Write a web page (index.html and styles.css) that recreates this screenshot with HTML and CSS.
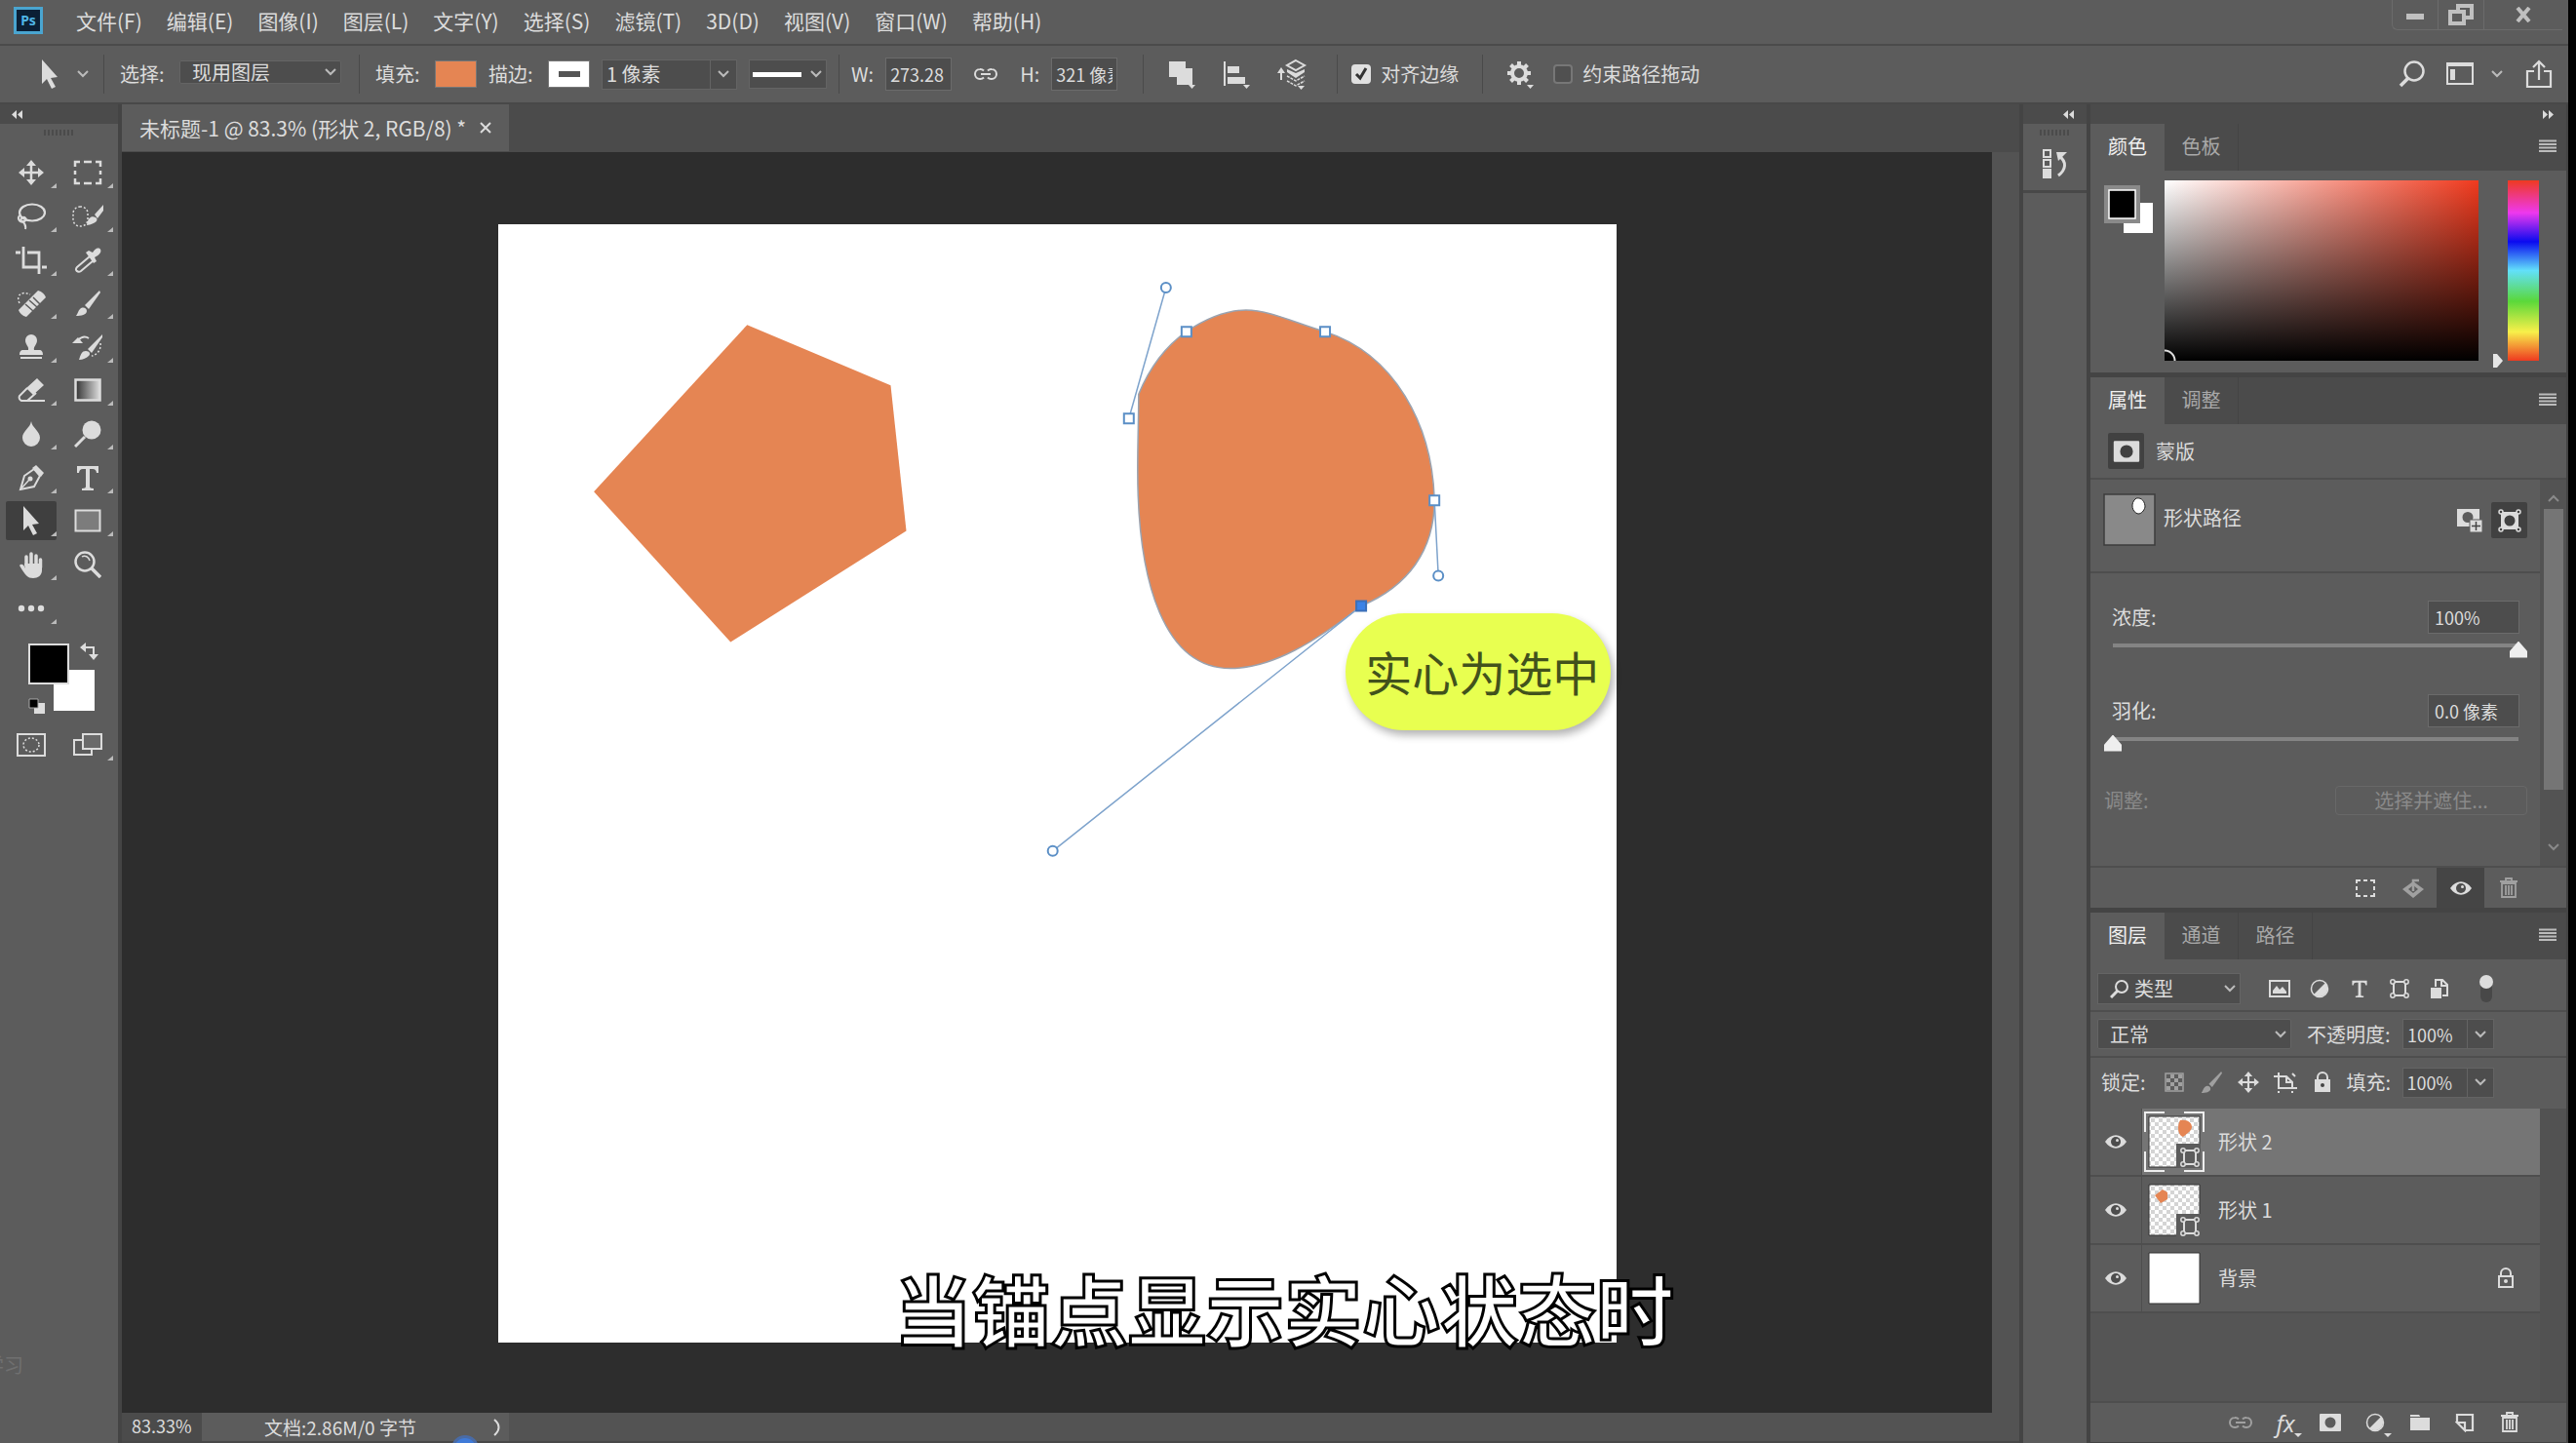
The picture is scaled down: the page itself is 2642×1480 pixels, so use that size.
FILE: index.html
```html
<!DOCTYPE html>
<html lang="zh-CN">
<head>
  <meta charset="UTF-8" />
  <meta name="viewport" content="width=device-width, initial-scale=1.0"/>
  <title>未标题-1 @ 83.3%</title>
  <link rel="stylesheet" href="styles.css">
</head>
<body>
  <!-- shared icons -->
  <svg class="defs" aria-hidden="true">
    <symbol id="i-down" viewBox="0 0 14 10"><path d="M2 2l5 5 5-5" fill="none" stroke="#bbb" stroke-width="2"/></symbol>
    <symbol id="i-menu" viewBox="0 0 18 14"><path d="M0 1.500h18M0 5h18M0 8.500h18M0 12h18" stroke="currentColor" stroke-width="2"/></symbol>
    <symbol id="i-eye" viewBox="0 0 22 16"><path d="M0 8C6-1 16-1 22 8 16 17 6 17 0 8z" fill="currentColor"/><circle cx="11" cy="8" r="5" fill="#4d4d4d"/><circle cx="12.500" cy="6.500" r="1.500" fill="currentColor"/></symbol>
    <symbol id="i-path" viewBox="0 0 20 20"><path d="M4 3h12v14H4z" fill="none" stroke="currentColor" stroke-width="2"/><g fill="#5c5c5c" stroke="currentColor" stroke-width="1.500"><circle cx="3" cy="3" r="2.200"/><circle cx="17" cy="3" r="2.200"/><circle cx="3" cy="17" r="2.200"/><circle cx="17" cy="17" r="2.200"/></g></symbol>
    <symbol id="i-half" viewBox="0 0 20 20"><circle cx="10" cy="10" r="8.500" fill="none" stroke="currentColor" stroke-width="1.500"/><path d="M16 4A8.500 8.500 0 0 1 4 16z" fill="currentColor"/></symbol>
    <symbol id="i-mask" viewBox="0 0 24 20"><path fill-rule="evenodd" d="M2 1h20a1 1 0 0 1 1 1v16a1 1 0 0 1-1 1H2a1 1 0 0 1-1-1V2a1 1 0 0 1 1-1zM12 4.500a5.500 5.500 0 1 0 0 11 5.500 5.500 0 0 0 0-11z" fill="currentColor"/></symbol>
    <symbol id="i-move" viewBox="0 0 26 26"><path d="M13 3v20M3 13h20" stroke="currentColor" stroke-width="2.500"/><path d="M13 0l5 6H8zM13 26l5-6H8zM0 13l6-5v10zM26 13l-6-5v10z" fill="currentColor"/></symbol>
    <symbol id="i-brush" viewBox="0 0 26 26"><path d="M1 26c2-3 2-5 4-7 3-3 7-1 7 2 0 4-6 5-11 5z" fill="currentColor"/><path d="M10 15L25 0l1 2-12 17z" fill="currentColor"/></symbol>
    <symbol id="i-trash" viewBox="0 0 20 22"><path d="M1 4h18M7 4V1h6v3M3 6h14v14H3zM7 8v10M10 8v10M13 8v10" fill="none" stroke="currentColor" stroke-width="1.800"/></symbol>
    <symbol id="i-link" viewBox="0 0 26 14"><path d="M11 3.500A5 5 0 0 0 7 2a5 5 0 0 0 0 10 5 5 0 0 0 4-1.500M15 3.500A5 5 0 0 1 19 2a5 5 0 0 1 0 10 5 5 0 0 1-4-1.500M8 7h10" fill="none" stroke="currentColor" stroke-width="2"/></symbol>
    <symbol id="i-type" viewBox="0 0 24 26"><path d="M1 1h22v7h-2c-.5-3-1.500-4-4-4h-3v18c0 1 1 2 4 2v2H6v-2c3 0 4-1 4-2V4H7C4.500 4 3.500 5 3 8H1z" fill="currentColor"/></symbol>
    <symbol id="i-cursor" viewBox="0 0 20 30"><path d="M2 0l16 18-7 1 5 9-4 2-5-10-5 5z" fill="currentColor"/></symbol>
    <pattern id="checker" width="8" height="8" patternUnits="userSpaceOnUse"><path d="M0 0h8v8H0z" fill="#fff"/><path d="M0 0h4v4H0zM4 4h4v4H4z" fill="#d4d4d4"/></pattern>
    <linearGradient id="ramp"><stop offset="0" stop-color="#333"/><stop offset="1" stop-color="#ddd"/></linearGradient>
  </svg>

  <div class="app">
    <header class="menubar">
      <svg class="logo" viewBox="0 0 30 28" role="img" aria-label="Ps"><rect x="1.500" y="1.500" width="27" height="25" fill="#0b1f35" stroke="#4aa5d0" stroke-width="3"/><text x="15" y="19" text-anchor="middle">Ps</text></svg>
      <nav class="menus">
        <a href="#">文件(F)</a>
        <a href="#">编辑(E)</a>
        <a href="#">图像(I)</a>
        <a href="#">图层(L)</a>
        <a href="#">文字(Y)</a>
        <a href="#">选择(S)</a>
        <a href="#">滤镜(T)</a>
        <a href="#">3D(D)</a>
        <a href="#">视图(V)</a>
        <a href="#">窗口(W)</a>
        <a href="#">帮助(H)</a>
      </nav>
      <div class="window-controls">
        <button aria-label="最小化"><svg width="20" height="20" viewBox="0 0 20 20"><path d="M1 9h18v6H1z" fill="currentColor"/></svg></button>
        <button aria-label="还原"><svg width="26" height="22" viewBox="0 0 26 22"><path d="M10 7V2h14v12h-7M2 8h14v12H2z" fill="none" stroke="currentColor" stroke-width="4"/></svg></button>
        <button class="close" aria-label="关闭"><svg width="18" height="16" viewBox="0 0 18 16"><path d="M3 1l12 14M15 1L3 15" stroke="currentColor" stroke-width="4"/></svg></button>
      </div>
    </header>

    <div class="optionsbar">
      <div class="opt-group tool-preset">
        <svg width="22" height="30"><use href="#i-cursor"/></svg>
        <button aria-label="工具预设"><svg width="14" height="10"><use href="#i-down"/></svg></button>
      </div>
      <div class="opt-group">
        <label class="cap" for="pick">选择:</label>
        <select id="pick" class="pick"><option>现用图层</option></select>
      </div>
      <div class="opt-group">
        <span class="cap">填充:</span>
        <button class="swatch orange" aria-label="填充"></button>
        <label class="cap" for="strokeWidth">描边:</label>
        <button class="swatch stroke" aria-label="描边颜色"></button>
        <div class="combo wide">
          <input id="strokeWidth" type="text" value="1 像素">
          <button aria-label="描边宽度"><svg width="14" height="10"><use href="#i-down"/></svg></button>
        </div>
        <button class="line-style" aria-label="描边类型"><i></i><svg width="14" height="10"><use href="#i-down"/></svg></button>
      </div>
      <div class="opt-group size">
        <label for="w">W:</label>
        <input id="w" class="field" type="text" value="273.28">
        <button class="link" aria-label="链接宽高"><svg width="26" height="16"><use href="#i-link"/></svg></button>
        <label for="h">H:</label>
        <input id="h" class="field" type="text" value="321 像素">
      </div>
      <div class="opt-group ops">
        <button aria-label="路径操作"><svg width="30" height="30" viewBox="0 0 30 30"><path d="M2 2h17v7h7v17H10v-8H2z" fill="currentColor"/><path d="M22 26h7l-3.500 4z" fill="currentColor"/></svg></button>
        <button aria-label="路径对齐"><svg width="30" height="30" viewBox="0 0 30 30"><path d="M3 2v25" stroke="currentColor" stroke-width="2"/><path d="M6 7h12v7H6zM6 18h18v7H6zM22 26h7l-3.500 4z" fill="currentColor"/></svg></button>
        <button aria-label="路径排列"><svg width="32" height="32" viewBox="0 0 32 32"><path d="M5 22v-9" stroke="currentColor" stroke-width="2"/><path d="M5 9l4 6H1z" fill="currentColor"/><path d="M20 2l9 5-9 5-9-5z" fill="none" stroke="currentColor" stroke-width="2"/><path d="M11 11l9 4 9-4v3l-9 6-9-6z" fill="currentColor"/><path d="M11 18l9 5 9-5M11 23l9 5 9-5" fill="none" stroke="currentColor" stroke-width="1.500" stroke-dasharray="3 1"/><path d="M22 28h7l-3.500 4z" fill="currentColor"/></svg></button>
      </div>
      <div class="opt-group check">
        <input id="snap" type="checkbox" checked><label for="snap">对齐边缘</label>
      </div>
      <div class="opt-group check last">
        <button class="gear" aria-label="设置"><svg width="28" height="30" viewBox="0 0 28 30"><circle cx="13" cy="14" r="7" fill="none" stroke="currentColor" stroke-width="4"/><path d="M13 2v5M13 21v5M1 14h5M20 14h5M4.500 5.500L8 9M18 19l3.500 3.500M21.500 5.500L18 9M8 19l-3.500 3.500" stroke="currentColor" stroke-width="4"/><path d="M21 26h7l-3.500 4z" fill="currentColor"/></svg></button>
        <input id="drag" type="checkbox"><label for="drag">约束路径拖动</label>
      </div>
      <div class="opt-right">
        <button aria-label="搜索"><svg width="28" height="30" viewBox="0 0 28 30"><circle cx="16" cy="12" r="9.500" fill="none" stroke="currentColor" stroke-width="2.500"/><path d="M10 19l-8 8" stroke="currentColor" stroke-width="3.500"/></svg></button>
        <button aria-label="工作区"><svg width="30" height="26" viewBox="0 0 30 26"><path d="M2 3h26v20H2z" fill="none" stroke="currentColor" stroke-width="2"/><path d="M1 1h28v4H1zM5 8h5v11H5z" fill="currentColor"/></svg></button>
        <button class="slim" aria-label="切换工作区"><svg width="14" height="10"><use href="#i-down"/></svg></button>
        <button aria-label="共享"><svg width="28" height="30" viewBox="0 0 28 30"><path d="M9 12H2v16h24V12h-7M14 21V3M8 8l6-6 6 6" fill="none" stroke="currentColor" stroke-width="2.200"/></svg></button>
      </div>
    </div>

    <main class="workspace">
      <aside class="toolbox">
        <div class="collapse"><svg width="12" height="9" viewBox="0 0 12 9"><path d="M5 0v9L0 4.500zM11 0v9L6 4.500z" fill="currentColor"/></svg></div>
        <div class="grip"></div>
        <div class="tools">
          <button class="more" aria-label="移动"><svg width="26" height="26"><use href="#i-move"/></svg></button>
          <button class="more" aria-label="矩形选框"><svg width="30" height="26" viewBox="0 0 30 26"><path d="M2 7V2h5M11 2h8M23 2h5v5M28 11v4M28 19v5h-5M19 24h-8M7 24H2v-5M2 15v-4" fill="none" stroke="currentColor" stroke-width="2.500"/></svg></button>
          <button class="more" aria-label="套索"><svg width="30" height="28" viewBox="0 0 30 28"><ellipse cx="16" cy="10" rx="13" ry="8.500" fill="none" stroke="currentColor" stroke-width="2.200"/><path d="M3 13c-3 4 1 8 5 6s0-6-3-3 6 3 4 11" fill="none" stroke="currentColor" stroke-width="2"/></svg></button>
          <button class="more" aria-label="快速选择"><svg width="34" height="28" viewBox="0 0 34 28"><rect x="2" y="4" width="15" height="20" rx="7" fill="none" stroke="currentColor" stroke-width="1.500" stroke-dasharray="2 2"/><path d="M16 23c1-8 5-10 9-8s0 7-9 8zM24 12l9-10v6l-6 8z" fill="currentColor"/></svg></button>
          <button class="more" aria-label="裁剪"><svg width="32" height="28" viewBox="0 0 32 28"><path d="M0 6h5M8 0v21h16M27 21h5M12 6h12v22" fill="none" stroke="currentColor" stroke-width="2.800"/></svg></button>
          <button class="more" aria-label="吸管"><svg width="28" height="28" viewBox="0 0 28 28"><path d="M16 10L3 21c-3 3 1 6 4 4l13-11" fill="none" stroke="currentColor" stroke-width="2"/><path d="M12 6l3-2 4 2c4-7 10-5 8 0-1 2-4 4-6 5l2 4-3 2z" fill="currentColor"/></svg></button>
          <button class="more" aria-label="修复画笔"><svg width="30" height="28" viewBox="0 0 30 28"><path d="M3 14C-1 6 5 1 14 5" fill="none" stroke="currentColor" stroke-width="1.500" stroke-dasharray="2 2"/><path d="M2 21l20-20c4 1 7 4 8 7L10 28c-4-1-7-4-8-7z" fill="currentColor"/><path d="M9 15l8 7M13 11l8 7M17 8l7 7" stroke="#5c5c5c" stroke-width="1.500"/></svg></button>
          <button class="more" aria-label="画笔"><svg width="26" height="26"><use href="#i-brush"/></svg></button>
          <button class="more" aria-label="仿制图章"><svg width="26" height="28" viewBox="0 0 26 28"><path d="M10 17c1-4-3-5-3-10a6 6 0 0 1 12 0c0 5-4 6-3 10h5c3 0 4 2 4 5H1c0-3 1-5 4-5zM2 24h22v2H2z" fill="currentColor"/></svg></button>
          <button class="more" aria-label="历史记录画笔"><svg width="32" height="28" viewBox="0 0 32 28"><path d="M7 27c2-6 3-9 7-9s5 3 3 5-6 4-10 4zM16 16L31 1v3L20 20z" fill="currentColor"/><path d="M6 7c4-4 8-4 11-2" fill="none" stroke="currentColor" stroke-width="2"/><path d="M0 10l6-6 5 6z" fill="currentColor"/><path d="M29 10c1 6-3 12-9 13" fill="none" stroke="currentColor" stroke-width="1.500" stroke-dasharray="2 2"/></svg></button>
          <button class="more" aria-label="橡皮擦"><svg width="28" height="26" viewBox="0 0 28 26"><path d="M10 11L2 19c-1 2 0 4 2 5h6l9-8" fill="none" stroke="currentColor" stroke-width="2"/><path d="M9 11L20 1l7 7-11 10zM6 23h22v2H6z" fill="currentColor"/></svg></button>
          <button class="more" aria-label="渐变"><svg width="28" height="24" viewBox="0 0 28 24"><path d="M1.500 1.500h25v21h-25z" fill="url(#ramp)" stroke="currentColor" stroke-width="2.500"/></svg></button>
          <button class="more" aria-label="模糊"><svg width="20" height="28" viewBox="0 0 20 28"><path d="M10 1c1 7 9 10 9 17a9 9 0 0 1-18 0C1 11 9 8 10 1z" fill="currentColor"/></svg></button>
          <button class="more" aria-label="减淡"><svg width="28" height="28" viewBox="0 0 28 28"><circle cx="18" cy="10" r="9.500" fill="currentColor"/><path d="M11 17L1 27" stroke="currentColor" stroke-width="3"/></svg></button>
          <button class="more" aria-label="钢笔"><svg width="26" height="28" viewBox="0 0 26 28"><path d="M2 26L6 12l10-7 6 7-6 11z" fill="none" stroke="currentColor" stroke-width="2"/><path d="M2 26l9-10" stroke="currentColor" stroke-width="1.500"/><circle cx="12" cy="15" r="2.500" fill="currentColor"/><path d="M14 4l4-3 8 8-3 4z" fill="currentColor"/></svg></button>
          <button class="more" aria-label="文字"><svg width="24" height="26"><use href="#i-type"/></svg></button>
          <button class="more active" aria-label="路径选择"><svg width="20" height="30"><use href="#i-cursor"/></svg></button>
          <button class="more" aria-label="矩形"><svg width="28" height="24" viewBox="0 0 28 24"><path d="M1.500 1.500h25v21h-25z" fill="#7c7c7c" stroke="currentColor" stroke-width="2"/></svg></button>
          <button class="more" aria-label="抓手"><svg width="26" height="28" viewBox="0 0 26 28"><path d="M8 15V6M13 14V3M18 15V5M22.500 17V9" stroke="currentColor" stroke-width="3.500" stroke-linecap="round"/><path d="M6 13h18v7c0 5-4 8-9 8-6 0-8-3-14-13 2-3 5 0 6 3z" fill="currentColor"/></svg></button>
          <button aria-label="缩放"><svg width="28" height="28" viewBox="0 0 28 28"><circle cx="11" cy="11" r="9.500" fill="none" stroke="currentColor" stroke-width="2.500"/><path d="M8 6c3-2 7 0 8 4" fill="none" stroke="currentColor" stroke-width="1.500"/><path d="M18 18l9 9" stroke="currentColor" stroke-width="3.500"/></svg></button>
          <button class="more" aria-label="编辑工具栏"><svg width="28" height="8" viewBox="0 0 28 8"><circle cx="4" cy="4" r="3.200" fill="currentColor"/><circle cx="14" cy="4" r="3.200" fill="currentColor"/><circle cx="24" cy="4" r="3.200" fill="currentColor"/></svg></button>
        </div>
        <svg class="fgbg" viewBox="0 0 80 76" role="img" aria-label="前景色和背景色">
          <path d="M31 31h42v42H31z" fill="#fff"/>
          <path d="M6 5h40v40H6z" fill="#000" stroke="#ddd" stroke-width="2"/>
          <path d="M62 8h10v9M61 8h1" fill="none" stroke="#ddd" stroke-width="2"/><path d="M58 8l6-5v10zM67 15h10l-5 6z" fill="#ddd"/>
          <path d="M11 65h11v11H11z" fill="#ddd"/><path d="M6 61h9v9H6z" fill="#000" stroke="#aaa"/>
        </svg>
        <div class="modes">
          <button aria-label="快速蒙版"><svg width="32" height="26" viewBox="0 0 32 26"><path d="M2 2h28v22H2z" fill="none" stroke="currentColor" stroke-width="2"/><ellipse cx="16" cy="13" rx="8" ry="7" fill="none" stroke="currentColor" stroke-width="1.500" stroke-dasharray="2 2"/></svg></button>
          <button class="more" aria-label="屏幕模式"><svg width="32" height="26" viewBox="0 0 32 26"><path d="M2 8h18v15H2z" fill="none" stroke="currentColor" stroke-width="2"/><path d="M11 2h19v15H11z" fill="#6a6a6a" stroke="currentColor" stroke-width="2"/></svg></button>
        </div>
      </aside>

      <section class="document">
        <div class="doc-tabs">
          <div class="doc-tab"><span>未标题-1 @ 83.3% (形状 2, RGB/8) *</span><button aria-label="关闭文档"><svg width="12" height="12" viewBox="0 0 12 12"><path d="M1 1l10 10M11 1L1 11" stroke="currentColor" stroke-width="2"/></svg></button></div>
        </div>
        <div class="stage">
          <div class="pasteboard">
            <div class="artboard">
              <svg viewBox="512 231 1145 1145">
                <path d="M767 334L914 396 930 545 750 659 610 505z" fill="#e58553"/>
                <path d="M1168 405C1178 381 1194 357 1217 341C1238 327 1259 319 1278 319C1303 319 1330 333 1359 341C1430 364 1469 436 1471 514C1471 565 1444 602 1396 622C1350 658 1305 686 1262 686C1195 686 1167 600 1167 484C1167 450 1168 430 1168 405z" fill="#e58553" stroke="#9aa3b0" stroke-width="1.500"/>
                <path d="M1158 430L1196 296M1471 514L1475 591M1396 622L1080 873" fill="none" stroke="#7ea3cc" stroke-width="1.500"/>
                <g fill="#fff" stroke="#5b8fc6" stroke-width="2">
                  <path d="M1212 336h10v10h-10zM1354 336h10v10h-10zM1466 509h10v10h-10zM1153 425h10v10h-10z"/>
                  <circle cx="1196" cy="296" r="5"/><circle cx="1475" cy="591" r="5"/><circle cx="1080" cy="873" r="5"/>
                </g>
                <path d="M1391 617h10v10h-10z" fill="#3b82e6" stroke="#3c70b8" stroke-width="2"/>
              </svg>
              <div class="callout">实心为选中</div>
            </div>
          </div>
          <div class="scroll-y"></div>
        </div>
        <footer class="status">
          <span class="zoom">83.33%</span>
          <div class="doc-info"><span>文档:2.86M/0 字节</span><button aria-label="更多信息"><svg width="8" height="18" viewBox="0 0 8 18"><path d="M1 1c6 5 6 11 0 16" fill="none" stroke="currentColor" stroke-width="2"/></svg></button></div>
        </footer>
      </section>

      <aside class="dock">
        <div class="collapse right"><svg width="12" height="9" viewBox="0 0 12 9"><path d="M5 0v9L0 4.500zM11 0v9L6 4.500z" fill="currentColor"/></svg></div>
        <div class="dock-item">
          <div class="grip"></div>
          <button aria-label="历史记录"><svg width="28" height="32" viewBox="0 0 28 32"><path d="M2 2h7v7H2zM2 12h7v7H2z" fill="none" stroke="currentColor" stroke-width="2"/><path d="M1 21h9v10H1z" fill="currentColor"/><path d="M18 8c8 6 7 14-1 20" fill="none" stroke="currentColor" stroke-width="3"/><path d="M15 4h11l-9 9z" fill="currentColor"/></svg></button>
        </div>
      </aside>

      <aside class="panels">
        <div class="collapse right"><svg width="12" height="9" viewBox="0 0 12 9"><path d="M0 0v9l5-4.500zM6 0v9l5-4.500z" fill="currentColor"/></svg></div>

        <section class="panel color-panel">
          <div class="tabs">
            <button class="on">颜色</button><button>色板</button>
            <button class="panel-menu" aria-label="面板菜单"><svg width="18" height="14"><use href="#i-menu"/></svg></button>
          </div>
          <div class="color-body">
            <svg width="54" height="50" viewBox="0 0 54 50"><path d="M22 18h30v31H22z" fill="#fff"/><path d="M2 0h37v39H2z" fill="#8a8a8a"/><path d="M7 5h27v29H7z" fill="#000" stroke="#fff" stroke-width="1.500"/></svg>
            <div class="field-sv"></div>
            <div class="hue-wrap"><svg width="12" height="16" viewBox="0 0 12 16"><path d="M1 1h4l6 7-6 7H1z" fill="#e6e6e6"/></svg><div class="hue"></div></div>
          </div>
        </section>

        <section class="panel props">
          <div class="tabs">
            <button class="on">属性</button><button>调整</button>
            <button class="panel-menu" aria-label="面板菜单"><svg width="18" height="14"><use href="#i-menu"/></svg></button>
          </div>
          <div class="props-head"><span class="dark-icon"><svg width="30" height="24"><use href="#i-mask"/></svg></span><span>蒙版</span></div>
          <div class="props-scroll">
            <div class="props-main">
              <div class="shape-row">
                <svg class="shape-thumb" viewBox="0 0 54 54"><path d="M1 1h52v52H1z" fill="#898989" stroke="#3c3c3c" stroke-width="1.500"/><path d="M34 5c6-1 9 4 9 9-1 4-4 7-7 7-6-1-9-11-2-16z" fill="#fff" stroke="#222"/></svg>
                <span>形状路径</span>
                <button class="push" aria-label="添加像素蒙版"><svg width="28" height="26" viewBox="0 0 28 26"><path fill-rule="evenodd" d="M1 1h23v18H1zM12 4a5.500 5.500 0 1 0 0 11 5.500 5.500 0 0 0 0-11z" fill="currentColor"/><path d="M14 12h13v13H14z" fill="currentColor" stroke="#5c5c5c"/><path d="M20.500 14v9M16 18.500h9" stroke="#444" stroke-width="1.500"/></svg></button>
                <button class="dark-icon" aria-label="选择矢量蒙版"><svg width="24" height="24" viewBox="0 0 24 24"><path fill-rule="evenodd" d="M3 3h18v18H3zM12 6.500a5.500 5.500 0 1 0 0 11 5.500 5.500 0 0 0 0-11z" fill="currentColor"/><g fill="#414141" stroke="currentColor" stroke-width="1.500"><circle cx="3" cy="3" r="2"/><circle cx="21" cy="3" r="2"/><circle cx="3" cy="21" r="2"/><circle cx="21" cy="21" r="2"/></g></svg></button>
              </div>
              <div class="slider-row">
                <label for="density">浓度:</label><input class="field" type="text" value="100%" aria-label="浓度值">
                <input id="density" type="range" min="0" max="100" value="100">
              </div>
              <div class="slider-row">
                <label for="feather">羽化:</label><input class="field" type="text" value="0.0 像素" aria-label="羽化值">
                <input id="feather" type="range" min="0" max="100" value="0">
              </div>
              <div class="refine"><span>调整:</span><button disabled>选择并遮住...</button></div>
            </div>
            <div class="props-bar">
              <svg width="14" height="10" viewBox="0 0 14 10"><path d="M2 8l5-5 5 5" fill="none" stroke="currentColor" stroke-width="2"/></svg>
              <i></i>
              <svg width="14" height="10" viewBox="0 0 14 10"><path d="M2 2l5 5 5-5" fill="none" stroke="currentColor" stroke-width="2"/></svg>
            </div>
          </div>
          <div class="props-foot">
            <button aria-label="载入选区"><svg width="22" height="20" viewBox="0 0 22 20"><path d="M2 5V2h4M9 2h4M16 2h4v3M20 8v4M20 15v3h-4M13 18H9M6 18H2v-3M2 12V8" fill="none" stroke="currentColor" stroke-width="2"/></svg></button>
            <button class="dim" aria-label="应用蒙版"><svg width="24" height="22" viewBox="0 0 24 22"><path fill-rule="evenodd" d="M12 4l11 8-11 9L1 12zM12 8l-5 4 5 4 5-4z" fill="currentColor"/><path d="M12 14V3h6" stroke="currentColor" stroke-width="2.500" fill="none"/></svg></button>
            <button class="on" aria-label="停用蒙版"><svg width="22" height="16"><use href="#i-eye"/></svg></button>
            <button class="dim" aria-label="删除蒙版"><svg width="20" height="22"><use href="#i-trash"/></svg></button>
          </div>
        </section>

        <section class="panel layers">
          <div class="tabs">
            <button class="on">图层</button><button>通道</button><button>路径</button>
            <button class="panel-menu" aria-label="面板菜单"><svg width="18" height="14"><use href="#i-menu"/></svg></button>
          </div>
          <div class="layer-row filter">
            <div class="kind"><svg width="20" height="20" viewBox="0 0 20 20"><circle cx="12" cy="8" r="6" fill="none" stroke="currentColor" stroke-width="2"/><path d="M8 12l-7 7" stroke="currentColor" stroke-width="3"/></svg><select aria-label="滤镜类型"><option>类型</option></select></div>
            <div class="filter-icons">
              <button aria-label="像素图层"><svg width="22" height="18" viewBox="0 0 22 18"><path d="M1 1h20v16H1z" fill="none" stroke="currentColor" stroke-width="2"/><path d="M4 14V11l4-5 3 4 3-3 4 5v2z" fill="currentColor"/></svg></button>
              <button aria-label="调整图层"><svg width="20" height="20"><use href="#i-half"/></svg></button>
              <button aria-label="文字图层"><svg width="18" height="18"><use href="#i-type"/></svg></button>
              <button aria-label="形状图层"><svg width="20" height="20"><use href="#i-path"/></svg></button>
              <button aria-label="智能对象"><svg width="20" height="22" viewBox="0 0 20 22"><path d="M6 9V2h7l5 5v11h-5M12 2v6h6" fill="none" stroke="currentColor" stroke-width="2"/><path d="M1 10h11v11H1z" fill="currentColor"/></svg></button>
            </div>
            <button class="toggle" aria-label="打开滤镜"><svg width="14" height="30" viewBox="0 0 14 30"><rect x="1" y="6" width="12" height="23" rx="6" fill="#484848"/><circle cx="7" cy="8" r="7" fill="currentColor"/></svg></button>
          </div>
          <div class="layer-row blend">
            <select aria-label="混合模式"><option>正常</option></select>
            <label for="opacity">不透明度:</label>
            <div class="combo"><input id="opacity" type="text" value="100%"><button aria-label="不透明度滑块"><svg width="14" height="10"><use href="#i-down"/></svg></button></div>
          </div>
          <div class="layer-row locks">
            <span>锁定:</span>
            <div class="lock-icons">
              <button class="dim" aria-label="锁定透明像素"><svg width="20" height="20" viewBox="0 0 20 20"><path d="M1 1h18v18H1z" fill="none" stroke="currentColor" stroke-width="1.500"/><path d="M6 2h4v4H6zM14 2h4v4h-4zM2 6h4v4H2zM10 6h4v4h-4zM6 10h4v4H6zM14 10h4v4h-4zM2 14h4v4H2zM10 14h4v4h-4z" fill="currentColor"/></svg></button>
              <button class="dim" aria-label="锁定图像像素"><svg width="22" height="24"><use href="#i-brush"/></svg></button>
              <button aria-label="锁定位置"><svg width="22" height="22"><use href="#i-move"/></svg></button>
              <button aria-label="防止嵌套"><svg width="24" height="22" viewBox="0 0 24 22"><path d="M0 5h13l6 6v6M5 1v16h19M19 20v2M13 5v6h6M5 20v2M19 2l3 3" fill="none" stroke="currentColor" stroke-width="2"/></svg></button>
              <button aria-label="锁定全部"><svg width="18" height="22" viewBox="0 0 18 22"><path d="M4 9V6a5 5 0 0 1 10 0v3" fill="none" stroke="currentColor" stroke-width="2"/><path d="M1 8h16v13H1z" fill="currentColor"/><circle cx="9" cy="14" r="2" fill="#444"/></svg></button>
            </div>
            <label for="fill">填充:</label>
            <div class="combo"><input id="fill" type="text" value="100%"><button aria-label="填充滑块"><svg width="14" height="10"><use href="#i-down"/></svg></button></div>
          </div>
          <div class="layer-area">
            <ul class="layer-list">
              <li class="selected">
                <button class="eye" aria-label="显示"><svg width="22" height="16"><use href="#i-eye"/></svg></button>
                <div class="layer-name">
                  <svg class="thumb" viewBox="0 0 64 64"><path d="M6 6h52v52H6z" fill="url(#checker)" stroke="#333"/><path d="M38 10c8-1 12 3 12 7s-7 8-9 10c-6-2-6-12-3-17z" fill="#e58553"/><path d="M34 34h25v25H34z" fill="#5c5c5c"/><use href="#i-path" x="38" y="38" width="20" height="20"/><path d="M2 22V2h20M42 2h20v20M62 42v20H42M22 62H2V42" fill="none" stroke="#eee" stroke-width="2"/></svg>
                  <span>形状 2</span>
                </div>
              </li>
              <li>
                <button class="eye" aria-label="显示"><svg width="22" height="16"><use href="#i-eye"/></svg></button>
                <div class="layer-name">
                  <svg class="thumb" viewBox="0 0 64 64"><path d="M6 6h52v52H6z" fill="url(#checker)" stroke="#333"/><path d="M12 17l8-6 5 3v7l-7 4z" fill="#e58553"/><path d="M34 36h25v23H34z" fill="#5c5c5c"/><use href="#i-path" x="38" y="39" width="20" height="20"/></svg>
                  <span>形状 1</span>
                </div>
              </li>
              <li>
                <button class="eye" aria-label="显示"><svg width="22" height="16"><use href="#i-eye"/></svg></button>
                <div class="layer-name">
                  <svg class="thumb" viewBox="0 0 64 64"><path d="M6 6h52v52H6z" fill="#fff" stroke="#333"/></svg>
                  <span>背景</span>
                  <svg class="locked" width="18" height="22" viewBox="0 0 18 22"><path d="M4 9V6a5 5 0 0 1 10 0v3M2 9h14v11H2z" fill="none" stroke="currentColor" stroke-width="2"/><circle cx="9" cy="14" r="2" fill="currentColor"/></svg>
                </div>
              </li>
            </ul>
            <div class="layer-bar"></div>
          </div>
          <div class="layers-foot">
            <button class="dim" aria-label="链接图层"><svg width="26" height="16"><use href="#i-link"/></svg></button>
            <button class="fx tick">fx</button>
            <button aria-label="添加蒙版"><svg width="24" height="20"><use href="#i-mask"/></svg></button>
            <button class="tick" aria-label="新建调整图层"><svg width="20" height="20"><use href="#i-half"/></svg></button>
            <button aria-label="新建组"><svg width="22" height="18" viewBox="0 0 22 18"><path d="M1 1h9l2 3h9v13H1z" fill="currentColor"/><path d="M1 3.500h12" stroke="#5c5c5c"/></svg></button>
            <button aria-label="新建图层"><svg width="20" height="20" viewBox="0 0 20 20"><path d="M2 10V2h16v16h-8M2 10h8v8z" fill="none" stroke="currentColor" stroke-width="2.200"/></svg></button>
            <button aria-label="删除图层"><svg width="20" height="22"><use href="#i-trash"/></svg></button>
          </div>
        </section>
      </aside>
    </main>

    <div class="subtitle">当锚点显示实心状态时</div>
    <div class="watermark">学习</div>
    <div class="progress-dot"></div>
  </div>
</body>
</html>
```
FILE: styles.css
```css
* {
  box-sizing: border-box;
}
body {
  margin: 0;
  background: #000;
  color: #dcdcdc;
  font-family: "Noto Sans CJK SC", "Noto Sans", sans-serif;
  font-size: 20px;
  line-height: 24px;
}
button, input, select {
  font: inherit;
  color: inherit;
  margin: 0;
}
button {
  display: flex;
  align-items: center;
  justify-content: center;
  padding: 0;
  border: 0;
  background: none;
}
a {
  color: inherit;
  text-decoration: none;
}
svg {
  display: block;
  flex: none;
}
.defs {
  position: absolute;
  width: 0;
  height: 0;
}
.app {
  position: relative;
  display: flex;
  flex-direction: column;
  height: 100vh;
  overflow: hidden;
  background: #444;
  border-right: 8px solid #000;
}

/* menu bar */
.menubar {
  display: flex;
  align-items: center;
  flex: none;
  height: 47px;
  padding-left: 14px;
  background: #5c5c5c;
  border-bottom: 2px solid #4b4b4b;
}
.logo {
  width: 30px;
  height: 28px;
  margin-bottom: 4px;
}
.logo text {
  font: bold 14px "Noto Sans", sans-serif;
  fill: #4fb5e6;
}
.menus {
  display: flex;
  gap: 25px;
  margin: 0 auto 4px 34px;
  font-size: 21px;
}
.window-controls {
  display: flex;
  align-self: flex-start;
  height: 31px;
  margin-right: 6px;
  border: 1px solid #6b6b6b;
  border-top: 0;
  border-right: 0;
  border-radius: 0 0 0 6px;
  color: #c0c0c0;
}
.window-controls button {
  width: 47px;
  border-right: 1px solid #6b6b6b;
}
.window-controls .close {
  width: 80px;
  border: 0;
}

/* options bar */
.optionsbar {
  display: flex;
  align-items: center;
  flex: none;
  height: 60px;
  background: #5c5c5c;
  border-bottom: 2px solid #484848;
}
.opt-group {
  display: flex;
  align-items: center;
  flex: none;
  gap: 12px;
  height: 40px;
  padding: 0 12px 0 16px;
  border-right: 1px solid #4a4a4a;
}
.cap {
  width: 49px;
}
.tool-preset {
  gap: 16px;
  padding-left: 40px;
  padding-right: 14px;
}
.swatch {
  width: 43px;
  height: 28px;
  border: 1px solid #777;
}
.orange {
  background: #e58553;
}
.stroke {
  background: linear-gradient(#555, #555) center / 22px 6px no-repeat #fff;
}
select {
  appearance: none;
  height: 31px;
  padding: 0 24px 0 12px;
  border: 1px solid #646464;
  border-radius: 2px;
  line-height: 24px;
  background: url("data:image/svg+xml,%3Csvg xmlns='http://www.w3.org/2000/svg' width='14' height='10'%3E%3Cpath d='M2 2l5 5 5-5' fill='none' stroke='%23bbb' stroke-width='2'/%3E%3C/svg%3E") right 3px center no-repeat #4d4d4d;
}
.pick {
  width: 166px;
  height: 24px;
  margin: 0 6px 4px 0;
  line-height: 20px;
}
.field {
  width: 68px;
  height: 34px;
  padding: 0 4px;
  border: 1px solid #6b6b6b;
  background: #4d4d4d;
  font-size: 18px;
}
.combo {
  display: flex;
  height: 31px;
  border: 1px solid #646464;
  background: #4d4d4d;
}
.combo input {
  width: 66px;
  padding: 0 4px;
  border: 0;
  border-right: 1px solid #646464;
  background: none;
  font-size: 18px;
}
.combo button {
  width: 26px;
}
.combo.wide input {
  width: 111px;
  font-size: 20px;
}
.line-style {
  gap: 8px;
  width: 80px;
  height: 30px;
  border: 1px solid #646464;
  background: #4d4d4d;
}
.line-style i {
  width: 50px;
  height: 5px;
  background: #fff;
}
.size {
  padding-left: 12px;
  padding-right: 26px;
}
.size .link {
  margin: 0 10px;
}
.ops {
  gap: 26px;
  padding-left: 24px;
  padding-right: 30px;
}
.check {
  gap: 10px;
  padding-left: 14px;
  padding-right: 24px;
}
.check.last {
  padding-left: 24px;
  border: 0;
}
.gear {
  margin-right: 10px;
}
input[type="checkbox"] {
  appearance: none;
  width: 20px;
  height: 20px;
  border: 2px solid #777;
  border-radius: 4px;
  background: #505050;
}
input[type="checkbox"]:checked {
  border-color: #e0e0e0;
  background: url("data:image/svg+xml,%3Csvg xmlns='http://www.w3.org/2000/svg' width='16' height='16'%3E%3Cpath d='M3 8l4 4 6-10' fill='none' stroke='%23333' stroke-width='3'/%3E%3C/svg%3E") center no-repeat #e0e0e0;
}
.opt-right {
  display: flex;
  align-items: center;
  gap: 20px;
  margin: 0 16px 0 auto;
}
.opt-right .slim {
  margin: 0 2px 0 -4px;
}

/* workspace */
.workspace {
  display: flex;
  flex: 1;
  gap: 4px;
  min-height: 0;
  padding-right: 2px;
}
.collapse {
  display: flex;
  align-items: center;
  flex: none;
  height: 20px;
  padding: 0 12px;
  background: #4b4b4b;
}
.collapse.right {
  justify-content: flex-end;
}
.grip {
  width: 32px;
  height: 6px;
  margin: 6px auto 0;
  background: repeating-linear-gradient(90deg, #4b4b4b 0 2px, transparent 2px 4px);
}

/* toolbox */
.toolbox {
  width: 121px;
  flex: none;
  background: #5c5c5c;
}
.tools {
  display: grid;
  grid-template-columns: 52px 52px;
  grid-template-rows: repeat(11, 1fr);
  column-gap: 6px;
  height: 491px;
  margin: 16px 0 0 6px;
}
.tools button, .modes button {
  position: relative;
  width: 52px;
  height: 40px;
  align-self: center;
}
.tools .active {
  background: #3f3f3f;
  border-radius: 2px;
}
.more::after {
  content: "";
  position: absolute;
  right: 0;
  bottom: 4px;
  border-left: 6px solid transparent;
  border-bottom: 5px solid #bbb;
}
.fgbg {
  width: 80px;
  height: 76px;
  margin: 10px 0 12px 24px;
}
.modes {
  display: flex;
  gap: 6px;
  margin-left: 6px;
}

/* document window */
.document {
  display: flex;
  flex-direction: column;
  flex: 1;
  min-width: 0;
}
.doc-tabs {
  display: flex;
  flex: none;
  height: 49px;
  padding-bottom: 1px;
  background: #4b4b4b;
}
.doc-tab {
  display: flex;
  align-items: center;
  gap: 14px;
  padding: 0 18px;
  background: #5c5c5c;
  font-size: 21px;
}
.stage {
  display: flex;
  flex: 1;
  min-height: 0;
}
.pasteboard {
  display: flex;
  align-items: center;
  justify-content: center;
  flex: 1;
  padding: 2px 0 0 1px;
  background: #2d2d2d;
}
.artboard {
  position: relative;
  height: 88.8%;
  aspect-ratio: 1;
  background: #fff;
}
.artboard svg {
  width: 100%;
  height: 100%;
}
.callout {
  position: absolute;
  left: 75.8%;
  top: 34.8%;
  padding: 29px 12px 31px 20px;
  border-radius: 60px;
  background: #e8ff50;
  color: #42521c;
  font-size: 48px;
  line-height: 60px;
  white-space: nowrap;
  box-shadow: 3px 5px 8px rgba(0, 0, 0, 0.3);
}
.scroll-y {
  width: 28px;
  background: #535353;
}
.status {
  display: flex;
  flex: none;
  height: 31px;
  background: #535353;
  border-bottom: 2px solid #484848;
  font-size: 18px;
  line-height: 26px;
}
.zoom {
  width: 82px;
  padding-left: 10px;
  background: #4b4b4b;
}
.doc-info {
  display: flex;
  align-items: center;
  justify-content: space-between;
  width: 315px;
  padding: 0 8px 0 64px;
  background: #5c5c5c;
  font-size: 19px;
}

/* dock */
.dock {
  width: 65px;
  flex: none;
  background: #5c5c5c;
}
.dock-item {
  display: flow-root;
  height: 71px;
  border-bottom: 3px solid #484848;
}
.dock-item button {
  margin: 13px auto 0;
}

/* panels */
.panels {
  display: flex;
  flex-direction: column;
  flex: none;
  width: 488px;
}
.panel {
  background: #5c5c5c;
  margin-bottom: 5px;
}
.tabs {
  display: flex;
  height: 48px;
  background: #4b4b4b;
}
.tabs button {
  width: 76px;
  padding-bottom: 2px;
  border-right: 1px solid #444;
  color: #a8a8a8;
}
.tabs .on {
  background: #5c5c5c;
  border: 0;
  color: #f0f0f0;
}
.tabs .panel-menu {
  width: 38px;
  margin-left: auto;
  border: 0;
  color: #bbb;
}
.color-body {
  display: flex;
  align-items: flex-start;
  padding: 10px 28px 12px 12px;
}
.color-body > svg {
  margin-top: 5px;
}
.field-sv {
  flex: 1;
  height: 185px;
  margin: 0 14px 0 10px;
  background: radial-gradient(circle at 0 100%, transparent 9px, #ddd 10px 11px, transparent 12px), linear-gradient(transparent, #000), linear-gradient(90deg, #fff, #f03a1e);
}
.hue-wrap {
  display: flex;
  align-items: flex-end;
  gap: 4px;
}
.hue-wrap svg {
  margin-bottom: -8px;
}
.hue {
  width: 32px;
  height: 185px;
  background: linear-gradient(#ee3a20, #ee38ee 18%, #0a0af0 34%, #62e0fa 50%, #5ad83a 67%, #f8f04a 84%, #ee3a20);
}

/* properties */
.props-head {
  display: flex;
  align-items: center;
  gap: 12px;
  height: 57px;
  padding-left: 18px;
  border-bottom: 2px solid #4e4e4e;
}
.dark-icon {
  display: flex;
  align-items: center;
  justify-content: center;
  width: 37px;
  height: 37px;
  background: #414141;
  border-radius: 2px;
}
.props-scroll {
  display: flex;
}
.props-main {
  flex: 1;
}
.shape-row {
  display: flex;
  gap: 8px;
  height: 96px;
  padding: 14px 13px 0 13px;
  border-bottom: 2px solid #4e4e4e;
}
.shape-row span {
  margin-top: 13px;
}
.shape-row .push {
  margin-left: auto;
}
.shape-row button {
  height: 37px;
  margin-top: 9px;
}
.shape-thumb {
  width: 54px;
  height: 54px;
}
.slider-row {
  display: grid;
  grid-template-columns: 1fr auto;
  align-items: center;
  padding: 28px 13px 0 14px;
}
.slider-row label {
  padding-left: 8px;
}
.slider-row .field {
  width: 94px;
  margin-right: 8px;
  padding-left: 6px;
}
.slider-row input[type="range"] {
  grid-column: 1 / -1;
  appearance: none;
  width: 100%;
  height: 24px;
  margin: 4px 0 6px;
  background: linear-gradient(#848484, #848484) center 6px / calc(100% - 18px) 4px no-repeat;
}
input[type="range"]::-webkit-slider-thumb {
  appearance: none;
  width: 18px;
  height: 17px;
  background: #eee;
  clip-path: polygon(50% 0, 100% 60%, 100% 100%, 0 100%, 0 60%);
}
.refine {
  display: flex;
  align-items: center;
  justify-content: space-between;
  height: 108px;
  padding: 0 13px 26px 14px;
  color: #8a8a8a;
}
.refine button {
  width: 197px;
  height: 30px;
  border: 1px solid #686868;
  border-radius: 4px;
  color: #8a8a8a;
}
.props-bar {
  display: flex;
  flex-direction: column;
  align-items: center;
  width: 27px;
  padding: 14px 0;
  background: #535353;
  color: #8a8a8a;
}
.props-bar i {
  width: 20px;
  height: 288px;
  margin: 6px 0 auto;
  background: #757575;
}
.props-foot {
  display: flex;
  justify-content: flex-end;
  height: 43px;
  padding-right: 35px;
  border-top: 2px solid #4e4e4e;
}
.props-foot button {
  width: 49px;
}
.props-foot .on {
  background: #454545;
}
.dim {
  color: #a0a0a0;
}

/* layers */
.layers {
  display: flex;
  flex-direction: column;
  flex: 1;
  min-height: 0;
  margin-bottom: 1px;
}
.layer-row {
  display: flex;
  align-items: center;
  flex: none;
  height: 47px;
  padding-left: 7px;
}
.filter {
  height: 54px;
  padding-top: 8px;
  border-bottom: 2px solid #4e4e4e;
}
.kind {
  display: flex;
  align-items: center;
  width: 147px;
  height: 32px;
  padding-left: 12px;
  border: 1px solid #646464;
  background: #4d4d4d;
}
.kind select {
  flex: 1;
  height: 30px;
  padding-left: 5px;
  border: 0;
}
.filter-icons {
  display: flex;
  margin-left: 19px;
}
.filter-icons button {
  width: 41px;
}
.toggle {
  margin-left: 21px;
}
.blend {
  border-bottom: 2px solid #4e4e4e;
}
.blend select {
  width: 199px;
}
.layer-row label {
  width: 98px;
  margin-left: 16px;
}
.locks {
  height: 52px;
  padding: 0 0 2px 11px;
}
.lock-icons {
  display: flex;
  margin-left: 10px;
}
.lock-icons button {
  width: 38px;
}
.locks label {
  width: 57px;
  margin-left: 6px;
}
.layer-area {
  display: flex;
  flex: 1;
  background: #555;
}
.layer-list {
  flex: 1;
  margin: 0;
  padding: 0;
  list-style: none;
}
.layer-list li {
  display: flex;
  height: 70px;
  background: #5c5c5c;
  border-bottom: 2px solid #4e4e4e;
}
.eye {
  width: 53px;
  border-right: 1px solid #4e4e4e;
}
.layer-name {
  display: flex;
  align-items: center;
  flex: 1;
  gap: 13px;
  padding: 0 26px 0 1px;
}
.selected .layer-name {
  background: #757575;
}
.thumb {
  width: 64px;
  height: 64px;
}
.locked {
  margin-left: auto;
}
.layer-bar {
  width: 27px;
  background: #525252;
}
.layers-foot {
  display: flex;
  justify-content: flex-end;
  flex: none;
  height: 42px;
  padding-right: 35px;
  border-top: 2px solid #4e4e4e;
}
.layers-foot button {
  width: 46px;
}
.fx {
  font: italic 24px "Noto Sans", sans-serif;
}
.tick {
  position: relative;
}
.tick::after {
  content: "";
  position: absolute;
  right: 6px;
  bottom: 5px;
  border: 4px solid transparent;
  border-top-color: #ddd;
  border-bottom: 0;
}

/* overlays on top of the window */
.subtitle {
  position: absolute;
  left: 0;
  right: 0;
  bottom: 90px;
  color: #fff;
  font-size: 80px;
  line-height: 100px;
  font-weight: 700;
  text-align: center;
  -webkit-text-stroke: 3px #000;
}
.watermark {
  position: absolute;
  left: -16px;
  bottom: 68px;
  color: #707070;
}
.progress-dot {
  position: absolute;
  left: 463px;
  bottom: -20px;
  width: 28px;
  height: 28px;
  border: 3px solid #4a6ba5;
  border-radius: 50%;
  background: #3f7ad8;
}
```
